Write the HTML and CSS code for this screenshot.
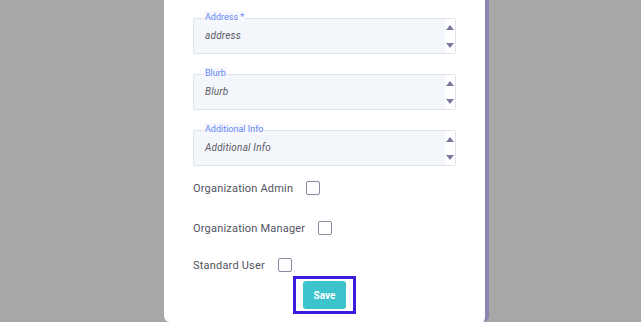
FILE: index.html
```html
<!DOCTYPE html>
<html>
<head>
<meta charset="utf-8">
<link rel="stylesheet" href="styles.css">
</head>
<body>
<div class="card">
  <div class="field">
    <span class="legend">Address *</span>
    <div class="text">address</div>
    <div class="scroll"><span class="up"></span><span class="down"></span></div>
  </div>
  <div class="field">
    <span class="legend">Blurb</span>
    <div class="text">Blurb</div>
    <div class="scroll"><span class="up"></span><span class="down"></span></div>
  </div>
  <div class="field">
    <span class="legend">Additional Info</span>
    <div class="text">Additional Info</div>
    <div class="scroll"><span class="up"></span><span class="down"></span></div>
  </div>
  <label class="row row-1"><span>Organization Admin</span><span class="box"></span></label>
  <label class="row row-2"><span>Organization Manager</span><span class="box"></span></label>
  <label class="row row-3"><span>Standard User</span><span class="box"></span></label>
  <div class="ring"><button class="save">Save</button></div>
</div>
</body>
</html>
```
FILE: styles.css
```css
html, body {
  margin: 0;
  padding: 0;
  background: #a7a7a7;
  height: 322px;
  overflow: hidden;
}
.card {
  margin-left: 164px;
  width: 325px;
  height: 322px;
  box-sizing: border-box;
  background: #fff;
  border-right: 4px solid #8986b1;
  border-radius: 0 0 6px 6px;
  padding: 18px 0 0 29px;
  font-family: Roboto, "Liberation Sans", sans-serif;
}
.field {
  position: relative;
  width: 263px;
  height: 36px;
  box-sizing: border-box;
  border: 1px solid #dfe2ea;
  border-radius: 2px;
  background: #f3f6fb;
  display: flex;
}
.field + .field {
  margin-top: 20px;
}
.legend {
  position: absolute;
  top: -8px;
  left: 10px;
  font-size: 9px;
  line-height: 12px;
  color: #6584f4;
  background: #f6f8fd;
  padding: 0 1px;
}
.text {
  flex: 1;
  padding: 11px 0 0 11px;
  font-size: 10px;
  line-height: 12px;
  font-style: italic;
  letter-spacing: 0.2px;
  color: #5c5c66;
}
.scroll {
  width: 10px;
  background: #fff;
  display: flex;
  flex-direction: column;
  justify-content: space-between;
  align-items: center;
  padding: 6px 0 5px;
  box-sizing: border-box;
}
.up {
  width: 0;
  height: 0;
  border-left: 4px solid transparent;
  border-right: 4px solid transparent;
  border-bottom: 5px solid #7d779c;
}
.down {
  width: 0;
  height: 0;
  border-left: 4px solid transparent;
  border-right: 4px solid transparent;
  border-top: 5px solid #7d779c;
}
.row {
  display: flex;
  align-items: center;
  gap: 13px;
  height: 14px;
  font-size: 11px;
  letter-spacing: 0.2px;
  color: #52545f;
}
.row-1 {
  margin-top: 15px;
}
.row-2 {
  margin-top: 26px;
}
.row-3 {
  margin-top: 23px;
}
.box {
  width: 14px;
  height: 14px;
  box-sizing: border-box;
  border: 1px solid #8c8a9e;
  border-radius: 2px;
  background: #fff;
}
.ring {
  margin: 4px 0 0 100px;
  width: 63px;
  box-sizing: border-box;
  border: 3px solid #3b1de0;
  padding: 2px 7px;
}
.save {
  display: block;
  width: 43px;
  height: 28px;
  border: none;
  border-radius: 3px;
  background: #3cc4cd;
  color: #fff;
  font-family: Roboto, "Liberation Sans", sans-serif;
  font-weight: bold;
  font-size: 10px;
  padding: 0;
}
```
